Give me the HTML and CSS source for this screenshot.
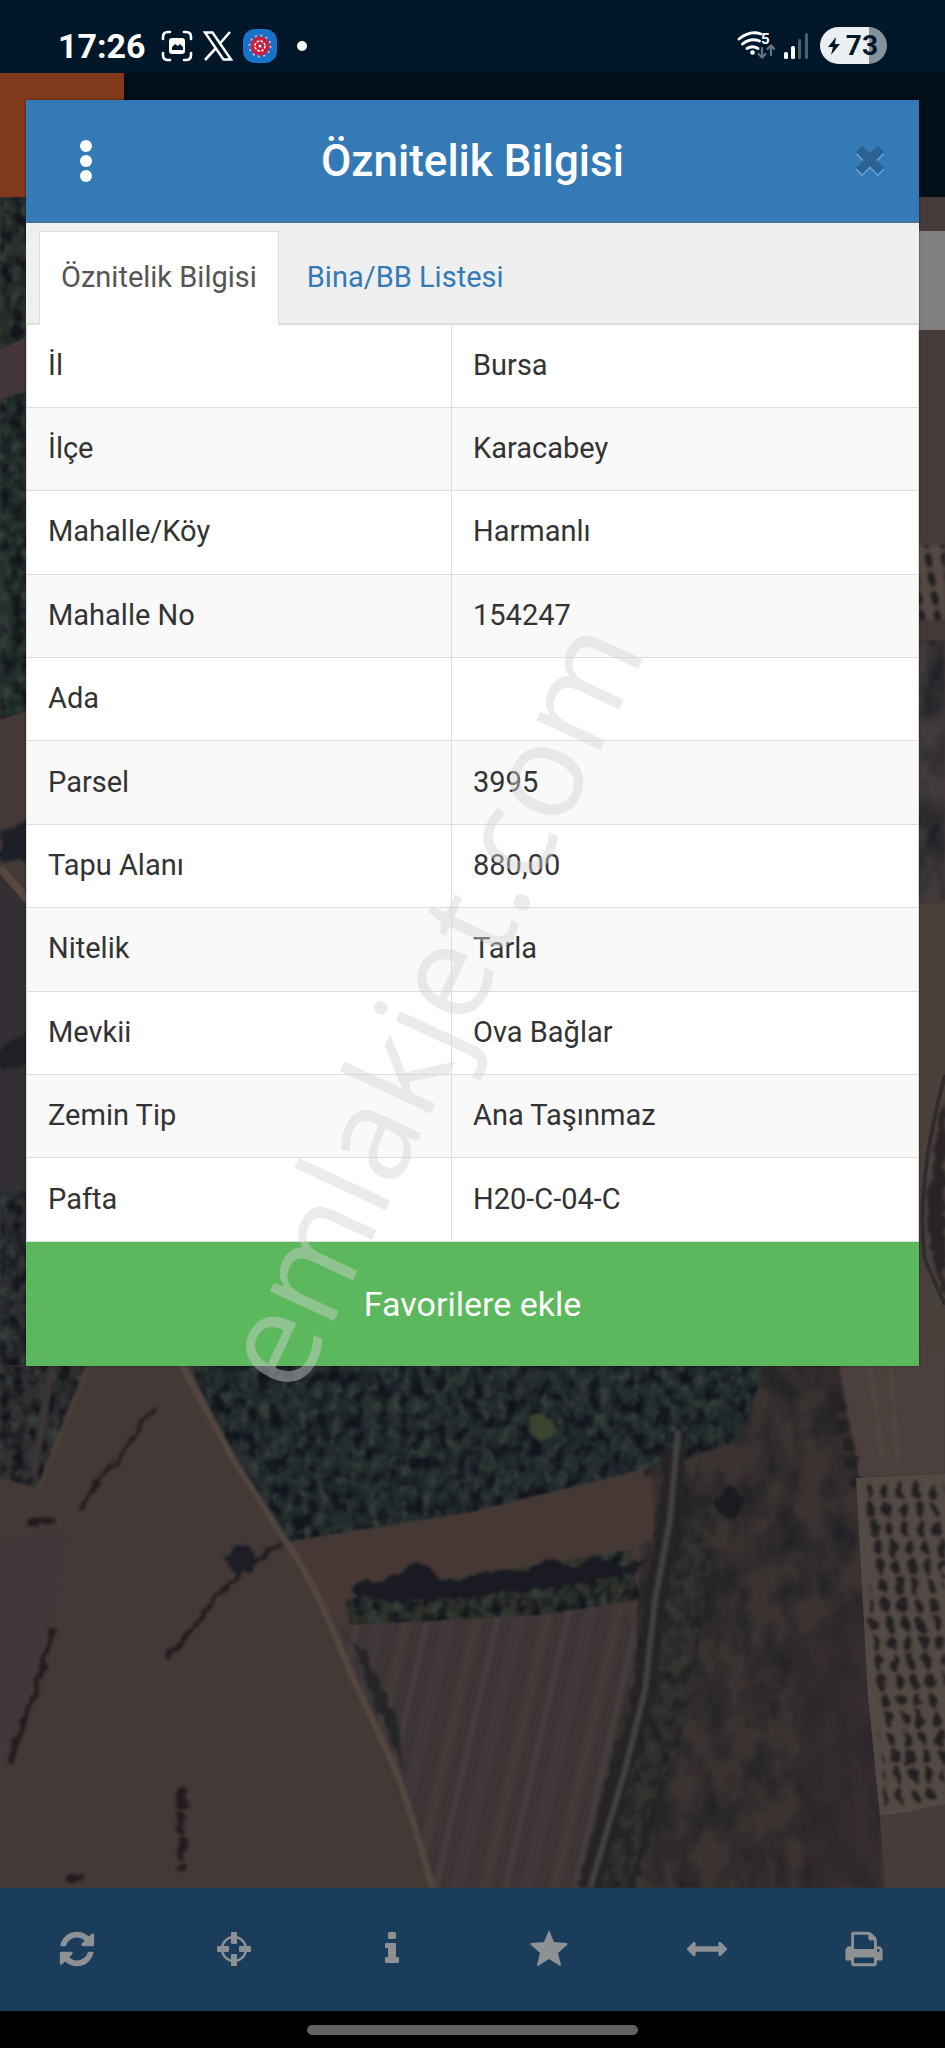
FILE: index.html
```html
<!DOCTYPE html>
<html lang="tr">
<head>
  <meta charset="UTF-8" />
  <meta name="viewport" content="width=device-width, initial-scale=1.0" />
  <title>Öznitelik Bilgisi</title>
  <link rel="stylesheet" href="styles.css">
</head>
<body>
  <div class="screen">
    <header class="status-bar">
      <div class="status-left">
        <span class="clock">17:26</span>
        <svg class="icon-capture" viewBox="0 0 32 32" fill="none" stroke="#fff" stroke-width="2.6" stroke-linecap="round">
          <path d="M2 9V7q0-5 5-5h2M23 2h2q5 0 5 5v2M30 23v2q0 5-5 5h-2M9 30H7q-5 0-5-5v-2" />
          <rect x="8" y="8" width="16" height="16" rx="3" fill="#fff" stroke="none" />
          <path d="M11 20v-3l3-3 3 2 2-2 3 3v3z" fill="#00172a" stroke="none" />
        </svg>
        <svg class="icon-x" viewBox="0 0 30 30" fill="none" stroke="#fff">
          <path d="M2 1.500h7.500L28 28.500h-7.500z" stroke-width="2.400" />
          <path d="M27 1 16.500 13M13 17 2 29" stroke-width="2.600" />
        </svg>
        <svg class="icon-app" viewBox="0 0 34 34">
          <rect width="34" height="34" rx="12" fill="#1673c9" />
          <circle cx="17" cy="17" r="10.500" fill="none" stroke="#e9a9b8" stroke-width="2" stroke-dasharray="2 3.500" />
          <circle cx="17" cy="17" r="9.500" fill="#c81f3e" />
          <circle cx="17" cy="17" r="5" fill="none" stroke="#fff" stroke-width="1.500" stroke-dasharray="2.600 1.300" />
          <circle cx="17" cy="17" r="1.500" fill="#fff" />
        </svg>
        <span class="more-dot"></span>
      </div>
      <div class="status-right">
        <svg class="icon-wifi" viewBox="0 0 38 30" fill="none" stroke="#fff" stroke-width="2.800" stroke-linecap="round">
          <path d="M2 8Q13-1 24 3M5.500 13q8-6.500 17-3M10 17.500q5.500-3.500 11 0" />
          <circle cx="15.500" cy="21.500" r="2.300" fill="#fff" stroke="none" />
          <text x="24" y="13" class="wifi-text">5</text>
          <path d="M25 17v9m-3.500-3 3.500 3.500 3.500-3.500M34 24v-9m-3.500 3 3.500-3.500 3.500 3.500" stroke="#66747f" stroke-width="2.200" />
        </svg>
        <svg class="icon-signal" viewBox="0 0 24 28">
          <rect x="0" y="20" width="4" height="7" rx="1.500" fill="#fff" />
          <rect x="7" y="14" width="4" height="13" rx="1.500" fill="#fff" />
          <rect x="14" y="7" width="3" height="20" rx="1.500" fill="#4d5e6b" />
          <rect x="21" y="1" width="3" height="26" rx="1.500" fill="#4d5e6b" />
        </svg>
        <span class="battery">
          <svg class="icon-bolt" viewBox="0 0 14 20"><path d="M9 1 1 11h5l-2 8 9-11H8z" fill="#00172a" /></svg>73
        </span>
      </div>
    </header>

    <div class="app-bar"><div class="app-logo"></div></div>

    <main class="map">
      <svg class="map-canvas" viewBox="0 197 945 1691" preserveAspectRatio="xMidYMid slice">
        <defs>
          <filter id="trees" x="0" y="0" width="100%" height="100%" color-interpolation-filters="sRGB">
            <feTurbulence type="fractalNoise" baseFrequency="0.085 0.07" numOctaves="3" seed="4" />
            <feColorMatrix values="0 0 0 0 0.07  0 0 0 0 0.08  0 0 0 0 0.11  3 0 0 0 -1.2" result="shade" />
            <feTurbulence type="fractalNoise" baseFrequency="0.1 0.08" numOctaves="2" seed="11" />
            <feColorMatrix values="0 0 0 0 0.22  0 0 0 0 0.25  0 0 0 0 0.24  0 3 0 0 -1.3" result="light" />
            <feMerge result="mix"><feMergeNode in="SourceGraphic" /><feMergeNode in="light" /><feMergeNode in="shade" /></feMerge>
            <feComposite in="mix" in2="SourceGraphic" operator="in" />
            <feGaussianBlur stdDeviation="1" />
          </filter>
          <filter id="scrub" x="0" y="0" width="100%" height="100%" color-interpolation-filters="sRGB">
            <feTurbulence type="fractalNoise" baseFrequency="0.04 0.025" numOctaves="4" seed="8" />
            <feColorMatrix values="0 0 0 0 0.12  0 0 0 0 0.12  0 0 0 0 0.14  2 0 0 0 -0.7" result="shade" />
            <feMerge result="mix"><feMergeNode in="SourceGraphic" /><feMergeNode in="shade" /></feMerge>
            <feComposite in="mix" in2="SourceGraphic" operator="in" />
            <feGaussianBlur stdDeviation="1" />
          </filter>
          <filter id="rough" x="-20%" y="-20%" width="140%" height="140%" color-interpolation-filters="sRGB">
            <feTurbulence type="fractalNoise" baseFrequency="0.08" numOctaves="2" seed="2" result="noise" />
            <feDisplacementMap in="SourceGraphic" in2="noise" scale="12" xChannelSelector="R" yChannelSelector="G" />
            <feGaussianBlur stdDeviation="1.6" />
          </filter>
          <filter id="soft"><feGaussianBlur stdDeviation="1.5" /></filter>
          <pattern id="furrows" width="68" height="300" patternUnits="userSpaceOnUse" patternTransform="rotate(13)">
            <rect width="68" height="300" fill="#3c3636" />
            <rect x="8" width="10" height="300" fill="#433a39" />
            <rect x="30" width="6" height="300" fill="#453c3b" />
            <rect x="48" width="12" height="300" fill="#40373a" />
          </pattern>
          <pattern id="orchard" width="16" height="19" patternUnits="userSpaceOnUse" patternTransform="skewX(9)">
            <rect width="16" height="19" fill="#544a45" />
            <ellipse cx="8" cy="9" rx="4" ry="8" fill="#222022" />
          </pattern>
        </defs>

        <rect y="197" width="945" height="1691" fill="#433937" />
        <path d="M0 1480 90 1366h95L290 1545l80 180 60 163H0z" fill="#433936" />
        <path d="M0 1540 70 1530 50 1650 0 1760z" fill="#42383a" filter="url(#soft)" />

        <!-- strip left of the panel -->
        <path d="M0 197h60v155L0 375z" fill="#293029" filter="url(#trees)" />
        <path d="M0 350 60 320v65L0 400z" fill="#43373a" />
        <path d="M0 400 60 380v325L0 720z" fill="#22302b" filter="url(#trees)" />
        <path d="M0 720 60 700v110L0 825z" fill="#443937" />
        <path d="M0 835 60 800v65L0 860z" fill="#1c1f26" filter="url(#rough)" />
        <path d="M0 870 60 930v260H0z" fill="#342f34" />
        <path d="M0 868 50 925" stroke="#56473f" stroke-width="8" />
        <path d="M0 1050 60 1010v50l-60 10z" fill="#1f2025" filter="url(#rough)" />
        <path d="M0 1190h60v176H0z" fill="#2b2d30" filter="url(#trees)" />

        <!-- strip right of the panel -->
        <rect x="900" y="197" width="45" height="350" fill="#453c3a" />
        <rect x="900" y="545" width="45" height="75" fill="url(#orchard)" filter="url(#soft)" />
        <path d="M900 640h45v260h-45z" fill="#423b3d" filter="url(#scrub)" />
        <path d="M900 905h45v461h-45z" fill="#493f3b" />
        <path d="M945 1100q-25 100-12 160l12 35z" fill="#282426" filter="url(#rough)" />
        <path d="M945 1075q-30 110-20 185l20 45" fill="none" stroke="#312c2c" stroke-width="4" />

        <!-- dark hedge, top left -->
        <path d="M0 1366h88L40 1488 0 1478z" fill="#302e2f" filter="url(#trees)" />
        <path d="M52 1366 33 1476" stroke="#3a3538" stroke-width="8" filter="url(#soft)" />
        <path d="M88 1366 38 1490" stroke="#4b4239" stroke-width="4" filter="url(#soft)" />

        <!-- scrub land -->
        <path d="M650 1350h190l20 130 10 200 15 208H430l200-120z" fill="#3a3331" filter="url(#scrub)" />
        <path d="M670 1530 720 1500 690 1700 640 1888h-80z" fill="#33332d" filter="url(#trees)" opacity=".5" />
        <path d="M790 1640 865 1600 882 1888h-70z" fill="#30292e" opacity=".6" filter="url(#soft)" />

        <!-- forest -->
        <path d="M190 1350h580l-30 90-60 20-210 52-185 30q-50-70-90-165z" fill="#232d2d" filter="url(#trees)" />
        <ellipse cx="542" cy="1427" rx="13" ry="13" fill="#3a442d" filter="url(#rough)" />
        <circle cx="730" cy="1502" r="14" fill="#191b20" filter="url(#rough)" />

        <!-- fields in the middle -->
        <path d="M290 1548 470 1515 652 1476 655 1540 490 1570 350 1590 330 1625z" fill="#463934" filter="url(#soft)" />
        <path d="M338 1628 480 1612 625 1605 638 1640 580 1888H435z" fill="url(#furrows)" filter="url(#soft)" />
        <path d="M345 1600 480 1575 630 1550 640 1600 540 1615 350 1625z" fill="#2f3229" filter="url(#trees)" />
        <path d="M352 1590q10-16 22-8 8-8 24-4 16-30 40 0l20 6 30-14 30 2 30-12 25 8 25-14 20 12 30-8-10 12-60 14-100 12-90 6-34-6z" fill="#191a22" filter="url(#rough)" />
        <path d="M352 1640q15 10 22 30l24 50 6 50-30-70z" fill="#252528" filter="url(#rough)" />

        <!-- tracks -->
        <path d="M180 1362 235 1462 285 1540q25 35 50 95l20 48 40 85q20 55 38 122" fill="none" stroke="#54463f" stroke-width="6" filter="url(#soft)" />
        <path d="M676 1450 670 1520 655 1600 645 1690 622 1770 590 1888" fill="none" stroke="#252324" stroke-width="22" filter="url(#rough)" />
        <path d="M678 1430 670 1520 655 1600 645 1690 625 1770 590 1888" fill="none" stroke="#454040" stroke-width="6" filter="url(#soft)" />
        <path d="M665 1780 630 1888" stroke="#242324" stroke-width="7" filter="url(#rough)" />

        <!-- ditches and lone trees -->
        <g fill="none" stroke="#221c20" stroke-linecap="round" filter="url(#rough)">
          <path d="M156 1407 120 1455 80 1508" stroke-width="4" />
          <path d="M278 1543 220 1592 190 1632 168 1656" stroke-width="5" />
          <path d="M53 1630 32 1700 10 1762" stroke-width="6" />
          <path d="M182 1790v80" stroke-width="9" stroke-dasharray="14 12" />
          <path d="M32 1523l18-4M72 1878h8" stroke-width="8" />
          <circle cx="241" cy="1560" r="13" fill="#1d1d25" stroke="#1d1d25" stroke-width="4" />
        </g>

        <!-- right side fields and orchard -->
        <path d="M836 1350h109v124l-86 2z" fill="#4b3f3d" filter="url(#soft)" />
        <path d="M870 1366l12 90M890 1366l8 95" stroke="#524541" stroke-width="4" filter="url(#soft)" />
        <path d="M836 1400l22 90" stroke="#242124" stroke-width="12" stroke-dasharray="12 8" filter="url(#rough)" />
        <path d="M856 1478 945 1474v332l-65 10-12-120z" fill="#544a45" />
        <path d="M866 1482 945 1478v320l-60 8-12-120z" fill="url(#orchard)" filter="url(#rough)" />
        <path d="M880 1818 945 1804v84h-60z" fill="#453c3b" />
      </svg>
      <div class="map-control"></div>
    </main>

    <nav class="toolbar">
      <button aria-label="Yenile">
        <svg viewBox="0 0 1792 1792"><path d="M1639 1056q0 5-1 7-64 268-268 434.500t-478 166.500q-146 0-282.500-55t-243.500-157l-129 129q-19 19-45 19t-45-19-19-45v-448q0-26 19-45t45-19h448q26 0 45 19t19 45-19 45l-137 137q71 66 161 102t187 36q134 0 250-65t186-179q11-17 53-117 8-23 30-23h192q13 0 22.500 9.500t9.500 22.500zm25-800v448q0 26-19 45t-45 19h-448q-26 0-45-19t-19-45 19-45l138-138q-148-137-349-137-134 0-250 65t-186 179q-11 17-53 117-8 23-30 23h-199q-13 0-22.500-9.500t-9.500-22.500v-7q65-268 270-434.500t480-166.500q146 0 284 55.500t245 156.500l130-129q19-19 45-19t45 19 19 45z" /></svg>
      </button>
      <button aria-label="Konum">
        <svg viewBox="0 0 40 40">
          <circle cx="20" cy="20" r="12" fill="none" stroke="#8d9194" stroke-width="2.500" />
          <rect x="17" y="3" width="6" height="12" rx="1" /><rect x="17" y="25" width="6" height="12" rx="1" />
          <rect x="3" y="17" width="12" height="6" rx="1" /><rect x="25" y="17" width="12" height="6" rx="1" />
        </svg>
      </button>
      <button aria-label="Bilgi">
        <svg viewBox="0 0 40 40"><rect x="16" y="3" width="8" height="7" rx="1.500" /><path d="M14 14h9q1 0 1 1v13h2q1 0 1 1v4q0 1-1 1H14q-1 0-1-1v-4q0-1 1-1h2v-9h-2q-1 0-1-1v-3q0-1 1-1z" /></svg>
      </button>
      <button aria-label="Favoriler">
        <svg viewBox="0 0 40 40"><path d="M20 1 25 13 38 14q1 1 0 2L29 24 32 36q0 1-1 1L20 30 9 37q-1 0-1-1l3-12L2 16q-1-1 0-2l13-1z" /></svg>
      </button>
      <button aria-label="Ölçüm">
        <svg viewBox="0 0 1792 1792"><path d="M1792 896q0 26-19 45l-256 256q-19 19-45 19t-45-19-19-45v-128h-1024v128q0 26-19 45t-45 19-45-19l-256-256q-19-19-19-45t19-45l256-256q19-19 45-19t45 19 19 45v128h1024v-128q0-26 19-45t45-19 45 19l256 256q19 19 19 45z" /></svg>
      </button>
      <button aria-label="Yazdır">
        <svg viewBox="0 0 1792 1792"><path d="M448 1536h896v-256h-896v256zm0-640h896v-384h-160q-40 0-68-28t-28-68v-160h-640v640zm1152 64q0-26-19-45t-45-19-45 19-19 45 19 45 45 19 45-19 19-45zm128 0v416q0 13-9.500 22.500t-22.500 9.500h-224v160q0 40-28 68t-68 28h-960q-40 0-68-28t-28-68v-160h-224q-13 0-22.500-9.500t-9.500-22.500v-416q0-79 56.500-135.500t135.500-56.500h64v-544q0-40 28-68t68-28h672q40 0 88 20t76 48l152 152q28 28 48 76t20 88v256h64q79 0 135.500 56.500t56.500 135.500z" /></svg>
      </button>
    </nav>

    <div class="gesture-bar"><span class="gesture-pill"></span></div>

    <section class="modal">
      <div class="modal-header">
        <button class="menu-btn" aria-label="Menü">
          <svg viewBox="0 0 12 42" fill="#fff"><circle cx="6" cy="6" r="6" /><circle cx="6" cy="21" r="6" /><circle cx="6" cy="36" r="6" /></svg>
        </button>
        <h1>Öznitelik Bilgisi</h1>
        <button class="close-btn" aria-label="Kapat">
          <svg viewBox="0 0 32 34" fill="none" stroke-width="9">
            <path d="M5 7 27 29M27 7 5 29" stroke="#6fa6d6" />
            <path d="M5 5 27 27M27 5 5 27" stroke="#2a6293" />
          </svg>
        </button>
      </div>

      <div class="tabs">
        <a class="tab active" href="#oznitelik">Öznitelik Bilgisi</a>
        <a class="tab" href="#bina">Bina/BB Listesi</a>
      </div>

      <table class="info-table" id="oznitelik">
        <tr><th scope="row">İl</th><td>Bursa</td></tr>
        <tr><th scope="row">İlçe</th><td>Karacabey</td></tr>
        <tr><th scope="row">Mahalle/Köy</th><td>Harmanlı</td></tr>
        <tr><th scope="row">Mahalle No</th><td>154247</td></tr>
        <tr><th scope="row">Ada</th><td></td></tr>
        <tr><th scope="row">Parsel</th><td>3995</td></tr>
        <tr><th scope="row">Tapu Alanı</th><td>880,00</td></tr>
        <tr><th scope="row">Nitelik</th><td>Tarla</td></tr>
        <tr><th scope="row">Mevkii</th><td>Ova Bağlar</td></tr>
        <tr><th scope="row">Zemin Tip</th><td>Ana Taşınmaz</td></tr>
        <tr><th scope="row">Pafta</th><td>H20-C-04-C</td></tr>
      </table>

      <button class="fav-btn">Favorilere ekle</button>
    </section>

    <svg class="watermark"><text x="50%" y="50%">emlakjet.com</text></svg>
  </div>
</body>
</html>
```

FILE: styles.css
```css
* {
  box-sizing: border-box;
}
body {
  margin: 0;
  background: #000;
  color: #333;
  font-family: Roboto, sans-serif;
  font-size: 29px;
}
button {
  border: none;
  padding: 0;
  background: none;
  font-family: inherit;
  cursor: pointer;
}
svg {
  display: block;
}
.screen {
  position: relative;
  display: flex;
  flex-direction: column;
  min-height: 100vh;
}

/* status bar */
.status-bar {
  display: flex;
  justify-content: space-between;
  align-items: center;
  height: 73px;
  padding: 18px 58px 0;
  background: #00172a;
  color: #fff;
}
.status-left, .status-right {
  display: flex;
  align-items: center;
}
.status-left {
  gap: 10px;
}
.status-right {
  gap: 9px;
}
.clock {
  margin-right: 5px;
  font-size: 34px;
  font-weight: 700;
}
.icon-capture {
  width: 32px;
  height: 32px;
}
.icon-x {
  width: 30px;
  height: 30px;
}
.icon-app {
  width: 34px;
  height: 34px;
}
.more-dot {
  width: 10px;
  height: 10px;
  margin-left: 10px;
  border-radius: 50%;
  background: #fff;
}
.icon-wifi {
  width: 38px;
  height: 30px;
}
.wifi-text {
  fill: #fff;
  stroke: none;
  font-size: 15px;
  font-weight: 700;
}
.icon-signal {
  width: 24px;
  height: 28px;
}
.battery {
  display: flex;
  align-items: center;
  gap: 5px;
  height: 37px;
  margin-left: 3px;
  padding: 0 9px 0 7px;
  border-radius: 19px;
  background: linear-gradient(to right, #eceff2 73%, #86939b 73%);
  color: #00172a;
  font-size: 28px;
  font-weight: 700;
}
.icon-bolt {
  width: 14px;
  height: 20px;
}

/* page behind the panel */
.app-bar {
  height: 124px;
  background: #000f1a;
}
.app-logo {
  width: 124px;
  height: 124px;
  background: #80391b;
}
.map {
  position: relative;
  flex: 1;
  overflow: hidden;
  background: #433937;
}
.map-canvas {
  position: absolute;
  width: 100%;
  height: 100%;
}
.map-control {
  position: absolute;
  top: 34px;
  right: 0;
  width: 60px;
  height: 99px;
  background: #808080;
}
.toolbar {
  display: flex;
  height: 123px;
  background: #1a3d5b;
}
.toolbar button {
  display: flex;
  flex: 1;
  justify-content: center;
  align-items: center;
  padding: 0 4px 2px 0;
}
.toolbar svg {
  width: 40px;
  height: 40px;
  fill: #8d9194;
}
.gesture-bar {
  display: flex;
  justify-content: center;
  align-items: center;
  height: 37px;
  background: #000;
}
.gesture-pill {
  width: 35%;
  height: 10px;
  border-radius: 5px;
  background: #626262;
}

/* panel */
.modal {
  position: absolute;
  top: 100px;
  left: 26px;
  right: 26px;
  background: #fff;
  box-shadow: 0 0 2px rgba(0,0,0,0.5);
}
.modal-header {
  display: flex;
  justify-content: space-between;
  align-items: center;
  height: 123px;
  padding: 0 33px;
  border-bottom: 2px solid #45739c;
  background: #337ab7;
}
.modal-header h1 {
  margin: 0;
  color: #fff;
  font-size: 44px;
  font-weight: 500;
}
.menu-btn svg {
  width: 54px;
  height: 42px;
}
.close-btn {
  margin-left: 22px;
}
.close-btn svg {
  width: 32px;
  height: 34px;
}
.tabs {
  display: flex;
  align-items: flex-end;
  height: 102px;
  padding: 0 13px;
  border-bottom: 2px solid #ddd;
  background: #efefef;
}
.tab {
  height: 94px;
  margin-bottom: -2px;
  padding: 0 21px;
  border: 1px solid transparent;
  color: #337ab7;
  line-height: 90px;
  text-decoration: none;
}
.tab + .tab {
  margin-left: 6px;
}
.tab.active {
  border-color: #ddd;
  border-bottom-color: #fff;
  background: #fff;
  color: #555;
}
.info-table {
  width: 100%;
  height: 917px;
  border-collapse: collapse;
  table-layout: fixed;
}
.info-table tr:nth-child(even) {
  background: #f9f9f9;
}
.info-table th, .info-table td {
  padding: 0 21px 2px;
  border: 1px solid #ddd;
  font-weight: 400;
  text-align: left;
}
.info-table tr:first-child > * {
  border-top: none;
}
.info-table th {
  width: 425px;
}
.fav-btn {
  display: block;
  width: 100%;
  height: 124px;
  background: #5cb85c;
  color: #fff;
  font-size: 34px;
}

.watermark {
  position: absolute;
  top: 0;
  left: 0;
  width: 100%;
  height: 100%;
  pointer-events: none;
}
.watermark text {
  fill: rgba(210,210,210,0.44);
  font-family: "Open Sans", sans-serif;
  font-size: 132px;
  text-anchor: middle;
  transform: rotate(-65deg);
  transform-origin: 50% 50%;
}
```
